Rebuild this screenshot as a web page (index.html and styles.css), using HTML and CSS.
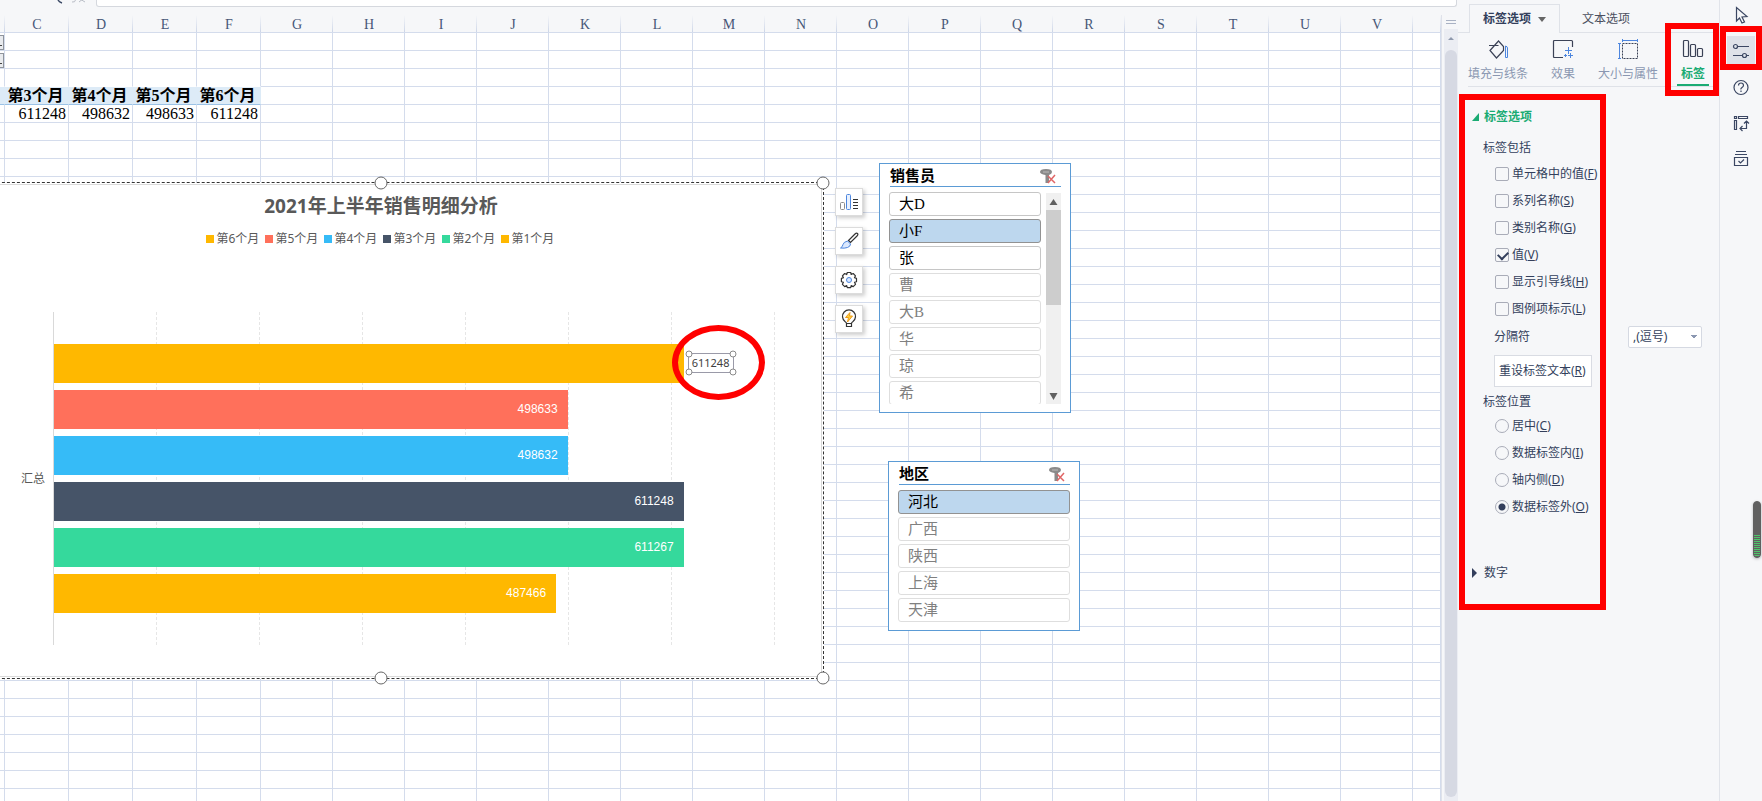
FILE: index.html
```html
<!DOCTYPE html>
<html lang="zh-CN">
<head>
    <meta charset="UTF-8">
    <meta name="viewport" content="width=device-width, initial-scale=1.0">
    <title>2021年上半年销售明细分析</title>
    <link rel="stylesheet" href="styles.css">
</head>
<body>
    <main class="workspace">
        <div class="formula-bar">
            <svg class="formula-icons" width="96" height="7" viewBox="0 0 96 7">
                <path d="M58 0q1 2 4 3" fill="none" stroke="#3b4a66" stroke-width="1.5"/>
                <path d="M72 2q3 1 4-3M79 2l5-4M80-1l5 3" fill="none" stroke="#b9bdc6"/>
            </svg>
            <input class="formula-input" type="text" aria-label="编辑栏">
        </div>
        <div class="sheet-row">
            <div class="sheet">
                <table class="cells">
                    <colgroup id="cols"></colgroup>
                    <thead><tr id="letters"></tr></thead>
                    <tbody id="rows"></tbody>
                </table>

                <section class="chart">
                    <span class="handle handle-top"></span>
                    <span class="handle handle-top-right"></span>
                    <span class="handle handle-bottom"></span>
                    <span class="handle handle-bottom-right"></span>
                    <h2 class="chart-title">2021年上半年销售明细分析</h2>
                    <ul class="legend">
                        <li class="amber">第6个月</li>
                        <li class="coral">第5个月</li>
                        <li class="sky">第4个月</li>
                        <li class="slate">第3个月</li>
                        <li class="green">第2个月</li>
                        <li class="amber">第1个月</li>
                    </ul>
                    <div class="chart-body">
                        <span class="category">汇总</span>
                        <div class="plot">
                            <div class="gridlines"><i></i><i></i><i></i><i></i><i></i><i></i><i></i></div>
                            <div id="bars" class="bars"></div>
                        </div>
                    </div>
                </section>

                <div class="chart-tools">
                    <button type="button" aria-label="图表元素">
                        <svg width="20" height="20" viewBox="0 0 20 20" fill="none">
                            <rect x="1.5" y="10.5" width="4" height="7" rx="1" stroke="#8c8c8c"/>
                            <rect x="7.5" y="2.5" width="4" height="15" rx="1" fill="#e8f1ff" stroke="#4d86de"/>
                            <path d="M14 7.500h5M14 10.500h5M14 13.500h5M14 16.500h5" stroke="#333"/>
                        </svg>
                    </button>
                    <button type="button" aria-label="图表样式">
                        <svg width="20" height="20" viewBox="0 0 20 20" fill="none">
                            <path d="M9.500 9.500L16 3q1.500-1.500 2.500-.5t-.5 2.500l-6.500 6.500z" stroke="#333" stroke-width="1.200"/>
                            <path d="M8.500 10l3 3q0 2.500-3 3.500t-7 .5q2-1 2.500-3.500T8.500 10z" fill="#dbe9ff" stroke="#4d86de"/>
                        </svg>
                    </button>
                    <button type="button" aria-label="设置">
                        <svg width="20" height="20" viewBox="0 0 20 20" fill="none">
                            <path d="M8.300 2.500h3.400l.5 2 2-1 2.300 2.300-1 2 2 .6v3.300l-2 .6 1 2-2.300 2.300-2-1-.5 2H8.300l-.6-2-2 1-2.300-2.300 1-2-2-.6V8.400l2-.6-1-2 2.300-2.300 2 1z" stroke="#333" stroke-width="1.200" stroke-linejoin="round"/>
                            <circle cx="10" cy="10" r="2.500" fill="#dbe9ff" stroke="#4d86de"/>
                        </svg>
                    </button>
                    <button type="button" aria-label="智能推荐">
                        <svg width="20" height="20" viewBox="0 0 20 20" fill="none">
                            <path d="M7.500 14.500q0-1-1.500-2a6.500 6.500 0 1 1 8 0q-1.500 1-1.500 2zM7.500 14.500v3h5v-3" stroke="#333" stroke-width="1.200"/>
                            <path d="M11 3.500l-4.500 5h3l-1 4.500 5-6h-3z" fill="#ffd23c" stroke="#ee9a1b"/>
                        </svg>
                    </button>
                </div>

                <section class="slicer slicer-people">
                    <header class="slicer-head">
                        <h3>销售员</h3>
                        <button type="button" class="clear" aria-label="清除筛选">
                            <svg width="16" height="16" viewBox="0 0 16 16"><path d="M0 3q0-3 6-3t6 3q0 2-3 3v8H5.500V6Q0 5 0 3z" fill="#8a8a8a"/><path d="M3 3h6" stroke="#bbb"/><path d="M8 7l7 7M15 6l-7 8" stroke="#e06666" stroke-width="1.500"/></svg>
                        </button>
                    </header>
                    <div class="slicer-body">
                        <div class="slicer-list">
                            <button type="button">大D</button>
                            <button type="button" class="selected">小F</button>
                            <button type="button">张</button>
                            <button type="button" class="empty">曹</button>
                            <button type="button" class="empty">大B</button>
                            <button type="button" class="empty">华</button>
                            <button type="button" class="empty">琼</button>
                            <button type="button" class="empty">希</button>
                        </div>
                        <div class="slicer-scroll">
                            <svg width="15" height="17" viewBox="0 0 15 17"><path d="M7.500 6l4 6h-8z" fill="#606060"/></svg>
                            <span class="slicer-thumb"></span>
                            <svg width="15" height="17" viewBox="0 0 15 17"><path d="M7.500 13l4-7h-8z" fill="#606060"/></svg>
                        </div>
                    </div>
                </section>

                <section class="slicer slicer-region">
                    <header class="slicer-head">
                        <h3>地区</h3>
                        <button type="button" class="clear" aria-label="清除筛选">
                            <svg width="16" height="16" viewBox="0 0 16 16"><path d="M0 3q0-3 6-3t6 3q0 2-3 3v8H5.500V6Q0 5 0 3z" fill="#8a8a8a"/><path d="M3 3h6" stroke="#bbb"/><path d="M8 7l7 7M15 6l-7 8" stroke="#e06666" stroke-width="1.500"/></svg>
                        </button>
                    </header>
                    <div class="slicer-list">
                        <button type="button" class="selected">河北</button>
                        <button type="button" class="empty">广西</button>
                        <button type="button" class="empty">陕西</button>
                        <button type="button" class="empty">上海</button>
                        <button type="button" class="empty">天津</button>
                    </div>
                </section>
            </div>
            <div class="vscroll">
                <span class="splitter"></span>
                <div class="track">
                    <svg width="14" height="21" viewBox="0 0 14 21"><path d="M7 8l3 3H4z" fill="#8f99ad"/></svg>
                    <span class="thumb"></span>
                </div>
            </div>
        </div>
    </main>

    <aside class="panel">
        <nav class="tabs">
            <button type="button" class="tab active">标签选项<i class="caret"></i></button>
            <button type="button" class="tab">文本选项</button>
        </nav>
        <nav class="groups">
            <button type="button" class="group">
                <svg width="22" height="22" viewBox="0 0 22 22" fill="none">
                    <path d="M2 6.500h9.500M3 11.500l8.500-9.500 5 5.500v4L9.500 19z" stroke="#3b4256" stroke-width="1.200"/>
                    <path d="M18.500 7v11.500h2V9q0-1.500-2-2" stroke="#4d86de"/>
                </svg>
                填充与线条
            </button>
            <button type="button" class="group">
                <svg width="22" height="22" viewBox="0 0 22 22" fill="none">
                    <path d="M11 18.500H2.500q-1 0-1-1v-15q0-1 1-1h17q1 0 1 1V8" stroke="#3b4256" stroke-width="1.200"/>
                    <path d="M16.500 8v7M13 11.500h7M18.500 14v5M16 16.500h5M13.500 15v3M12 16.500h3" stroke="#4d86de"/>
                </svg>
                效果
            </button>
            <button type="button" class="group">
                <svg width="22" height="22" viewBox="0 0 22 22" fill="none">
                    <path d="M5.500 1.500h15M5.500 0v3M20.500 0v3M2.500 4.500v15M1 4.500h3M1 19.500h3" stroke="#4d86de"/>
                    <path d="M5.500 4.500h15v15h-15z" stroke="#3b4256" stroke-dasharray="2 1"/>
                </svg>
                大小与属性
            </button>
            <button type="button" class="group active">
                <svg width="22" height="22" viewBox="0 0 22 22" fill="none" stroke="#3b4256" stroke-width="1.200">
                    <rect x="1.500" y="1.500" width="5" height="16" rx="1"/>
                    <rect x="8.500" y="5.500" width="5" height="12" rx="1"/>
                    <rect x="15.500" y="9.500" width="5" height="8" rx="1"/>
                </svg>
                标签
            </button>
        </nav>
        <div class="options">
            <h4 class="section-title open"><svg width="8" height="8" viewBox="0 0 8 8"><path d="M7 0v8H0z" fill="#1aab73"/></svg>标签选项</h4>
            <h5 class="sub-title">标签包括</h5>
            <div class="choices">
                <label><input type="checkbox">单元格中的值(<u>F</u>)</label>
                <label><input type="checkbox">系列名称(<u>S</u>)</label>
                <label><input type="checkbox">类别名称(<u>G</u>)</label>
                <label><input type="checkbox" checked>值(<u>V</u>)</label>
                <label><input type="checkbox">显示引导线(<u>H</u>)</label>
                <label><input type="checkbox">图例项标示(<u>L</u>)</label>
            </div>
            <div class="separator">
                <label for="sep">分隔符</label>
                <select id="sep"><option>,(逗号)</option></select>
            </div>
            <button type="button" class="reset">重设标签文本(<u>R</u>)</button>
            <h5 class="sub-title">标签位置</h5>
            <div class="choices">
                <label><input type="radio" name="pos">居中(<u>C</u>)</label>
                <label><input type="radio" name="pos">数据标签内(<u>I</u>)</label>
                <label><input type="radio" name="pos">轴内侧(<u>D</u>)</label>
                <label><input type="radio" name="pos" checked>数据标签外(<u>O</u>)</label>
            </div>
            <h4 class="section-title closed"><svg width="8" height="10" viewBox="0 0 8 10"><path d="M0 0l5 5-5 5z" fill="#333f5c"/></svg>数字</h4>
        </div>
        <span class="mark mark-options"></span>
        <span class="mark mark-group"></span>
    </aside>

    <nav class="rail">
        <button type="button" aria-label="选择">
            <svg width="20" height="20" viewBox="0 0 20 20" fill="none" stroke="#3b4763" stroke-width="1.200"><path d="M5.500 2.500v13.500l3-3 2.500 5 2.500-1-2.500-5 5-.5z"/></svg>
        </button>
        <button type="button" class="active" aria-label="属性">
            <svg width="20" height="20" viewBox="0 0 20 20" fill="none" stroke="#3b4763" stroke-width="1.200"><circle cx="4.500" cy="5.500" r="2"/><path d="M6.500 5.500H18M2 14.500h9.500M15.500 14.500H18"/><circle cx="13.500" cy="14.500" r="2"/></svg>
        </button>
        <button type="button" aria-label="帮助">
            <svg width="20" height="20" viewBox="0 0 20 20" fill="none" stroke="#3b4763" stroke-width="1.200"><circle cx="10" cy="10.500" r="7"/><path d="M7.500 8.500q0-2.500 2.500-2.500t2.500 2.500q0 1-1.500 2t-1 2M10 13.500v1.500"/></svg>
        </button>
        <button type="button" aria-label="分析">
            <svg width="20" height="20" viewBox="0 0 20 20" fill="none" stroke="#3b4763" stroke-width="1.200"><path d="M3.500 3.500h2v2h-2zM7.500 3.500h9v2h-9zM3.500 7.500h2v9h-2zM15.500 8v7.500h-6M13 10.500L15.500 8l2.500 2.500M11.500 13L9 15.500l2.500 2.500"/></svg>
        </button>
        <button type="button" aria-label="备份">
            <svg width="20" height="20" viewBox="0 0 20 20" fill="none" stroke="#3b4763" stroke-width="1.200"><path d="M5 2.500h10M4 5.500h12M3.500 8.500h13v8h-13zM7.500 12l2 2 3.500-3.500"/></svg>
        </button>
        <span class="mark mark-rail"></span>
        <span class="meter"></span>
    </nav>

    <script src="script.js"></script>
</body>
</html>
```
FILE: styles.css
```css
* {
    box-sizing: border-box;
}

body {
    display: flex;
    height: 100vh;
    margin: 0;
    overflow: hidden;
    background: #f6f7f9;
    color: #333f5c;
    font: 12px/16px "Noto Sans", "Noto Sans CJK SC", sans-serif;
}

button,
input,
select {
    margin: 0;
    padding: 0;
    border: none;
    background: none;
    color: inherit;
    font: inherit;
}

h2, h3, h4, h5, ul {
    margin: 0;
    padding: 0;
}

svg {
    display: block;
    flex: none;
}

/* Worksheet */

.workspace {
    flex: 1;
    min-width: 0;
    display: flex;
    flex-direction: column;
}

.formula-bar {
    display: flex;
    height: 15px;
    padding-right: 1px;
}

.formula-input {
    flex: 1;
    height: 7px;
    border: 1px solid #d5d8de;
    border-top: none;
    border-radius: 0 0 3px 3px;
    background: #fff;
}

.sheet-row {
    flex: 1;
    min-height: 0;
    display: flex;
}

.sheet {
    position: relative;
    flex: 1;
    min-width: 0;
    overflow: hidden;
    border-right: 1px solid #dfe2ea;
}

.cells {
    width: 100%;
    table-layout: fixed;
    border-collapse: separate;
    border-spacing: 0;
    background: #fff;
    font: 16px/16px "Liberation Serif", "Noto Sans CJK SC", serif;
    color: #000;
}

.cells th,
.cells td {
    height: 18px;
    padding: 1px 0 0;
    overflow: hidden;
    white-space: nowrap;
    border-right: 1px solid #d4dcec;
    border-bottom: 1px solid #d4dcec;
}

.cells thead th {
    padding-top: 3px;
    border-right: none;
    background: linear-gradient(#f6f7f9, #cdd6e8) right / 1px 100% no-repeat #f6f7f9;
    color: #465677;
    font-size: 14px;
    font-weight: normal;
    line-height: 14px;
}

.cells td {
    padding-right: 2px;
    text-align: right;
}

.cells .month {
    border-right-color: #ddebf7;
    border-bottom-color: #9bc2e6;
    background: #ddebf7;
    font-weight: bold;
    text-align: center;
}

.cells .above-month {
    border-bottom-color: #fff;
}

.cells .filter {
    padding: 0;
    background: linear-gradient(#444, #444) left 0 bottom 4px / 2px 1px no-repeat #e9ebee;
    box-shadow: inset 0 2px #fff, inset -1px 3px #8f949c, inset 0 -1px #8f949c;
}

.vscroll {
    width: 16px;
    display: flex;
    flex-direction: column;
    padding-left: 2px;
}

.splitter {
    height: 4px;
    margin: 5px 2px;
    border-top: 1px solid #a9b2c4;
    border-bottom: 1px solid #a9b2c4;
}

.track {
    flex: 1;
    display: flex;
    flex-direction: column;
    padding-bottom: 4px;
    background: #ebedf3;
}

.thumb {
    flex: 1;
    margin: 0 1px;
    border-radius: 6px;
    background: #d6d9e3;
}

/* Chart object */

.chart {
    position: absolute;
    top: 167px;
    left: -63px;
    width: 887px;
    height: 497px;
    padding: 13px 0 0 62px;
    border: 1px dashed #333;
    background: #fff;
    color: #595959;
    box-shadow: inset 0 0 0 1px #fff, inset 0 0 0 2px #d9d9d9;
}

.handle {
    position: absolute;
    width: 13px;
    height: 13px;
    border: 1px solid #666;
    border-radius: 50%;
    background: #fff;
    transform: translate(-50%, -50%);
}

.handle-top { top: 0; left: 50%; }
.handle-top-right { top: 0; left: 100%; }
.handle-bottom { top: 100%; left: 50%; }
.handle-bottom-right { top: 100%; left: 100%; }

.chart-title {
    width: 762px;
    font-size: 19px;
    line-height: 20px;
    text-align: center;
}

.legend {
    display: flex;
    justify-content: center;
    gap: 5px;
    width: 760px;
    margin-top: 15px;
    list-style: none;
}

.legend li {
    display: flex;
    align-items: center;
    gap: 3px;
    width: 54px;
    white-space: nowrap;
    -webkit-text-fill-color: #595959;
}

.legend li::before {
    content: "";
    width: 8px;
    height: 8px;
    background: currentColor;
}

.amber { color: #ffb800; }
.coral { color: #ff705b; }
.sky { color: #36bbf7; }
.slate { color: #465468; }
.green { color: #35d99c; }

.chart-body {
    display: flex;
    align-items: center;
    margin-top: 65px;
}

.category {
    width: 53px;
    padding-right: 8px;
    text-align: right;
}

.plot {
    position: relative;
    width: 722px;
    border-left: 1px solid #d9d9d9;
}

.gridlines {
    position: absolute;
    inset: 0;
    display: flex;
}

.gridlines i {
    flex: 1;
    border-right: 1px dashed #e6e6e6;
}

.bars {
    position: relative;
    display: flex;
    flex-direction: column;
    gap: 7px;
    padding: 32px 0;
}

.bar {
    position: relative;
    height: 39px;
    padding-right: 10px;
    background: currentColor;
    font: 12px/39px "Liberation Sans", sans-serif;
    text-align: right;
}

.bar-value {
    color: #fff;
}

.bar-outside {
    position: absolute;
    top: 9px;
    left: 100%;
    width: 46px;
    height: 20px;
    margin-left: 4px;
    border: 1px solid #9a9aa8;
    color: #404040;
    font: 11px/18px "Noto Sans", sans-serif;
    text-align: center;
}

.bar-outside .dot {
    position: absolute;
    width: 7px;
    height: 7px;
    border: 1px solid #8a8a8a;
    border-radius: 50%;
    background: #fff;
    transform: translate(-50%, -50%);
}

.dot:nth-of-type(1) { top: 0; left: 0; }
.dot:nth-of-type(2) { top: 0; left: 100%; }
.dot:nth-of-type(3) { top: 100%; left: 0; }
.dot:nth-of-type(4) { top: 100%; left: 100%; }

.ring {
    position: absolute;
    top: -29px;
    left: -17px;
    width: 93px;
    height: 75px;
    border: 6px solid #f00;
    border-radius: 50%;
}

.chart-tools {
    position: absolute;
    top: 173px;
    left: 835px;
    display: flex;
    flex-direction: column;
    gap: 11px;
}

.chart-tools button {
    display: grid;
    place-items: center;
    width: 28px;
    height: 28px;
    border: 1px solid #dcdcdc;
    background: #fff;
    box-shadow: 2px 2px 4px #0003;
}

/* Slicers */

.slicer {
    position: absolute;
    width: 192px;
    padding: 3px 9px 8px;
    border: 1px solid #5b9bd5;
    background: #fff;
    color: #000;
}

.slicer-people {
    top: 148px;
    left: 879px;
}

.slicer-region {
    top: 446px;
    left: 888px;
}

.slicer-head {
    display: flex;
    justify-content: space-between;
    height: 20px;
    margin-left: 1px;
    padding: 0 5px 0 0;
    border-bottom: 1px solid #5b9bd5;
}

.slicer-head h3 {
    font-size: 15px;
    line-height: 16px;
}

.slicer-body {
    display: flex;
    gap: 5px;
    height: 217px;
}

.slicer-list {
    flex: 1;
    display: flex;
    flex-direction: column;
    gap: 3px;
    padding-top: 5px;
    overflow: hidden;
}

.slicer-list button {
    flex: none;
    height: 24px;
    padding-left: 9px;
    border: 1px solid #c6c6c6;
    border-radius: 3px;
    font: 15px/22px "Liberation Serif", "Noto Sans CJK SC", serif;
    text-align: left;
}

.slicer-list .selected {
    border-color: #929292;
    background: #bdd7ee;
}

.slicer-list .empty {
    border-color: #dedede;
    color: #808080;
}

.slicer-scroll {
    display: flex;
    flex-direction: column;
    width: 15px;
    margin-top: 6px;
    background: #f0f0f0;
}

.slicer-thumb {
    height: 95px;
    margin-bottom: auto;
    background: #cdcdcd;
}

/* Task pane */

.panel {
    position: relative;
    width: 262px;
    border-right: 1px solid #e1e4ea;
}

.tabs {
    display: flex;
    height: 33px;
    padding: 4px 0 0 11px;
    box-shadow: inset 0 -1px #dfe2e8;
}

.tab {
    padding: 0 22px;
    color: #4b5060;
}

.tab.active {
    display: flex;
    align-items: center;
    gap: 7px;
    padding: 0 13px;
    border: 1px solid #dfe2e8;
    border-bottom: none;
    background: #f6f7f9;
    color: #333f5c;
    font-weight: bold;
}

.caret {
    border: 4px solid transparent;
    border-top: 5px solid #666;
    border-bottom: none;
}

.groups {
    display: flex;
    height: 54px;
    margin-left: 10px;
    border-bottom: 1px solid #dfe2e8;
}

.group {
    display: flex;
    flex-direction: column;
    align-items: center;
    gap: 5px;
    width: 60px;
    padding-top: 6px;
    color: #8b97b1;
    white-space: nowrap;
}

.group:nth-child(2) {
    width: 70px;
}

.group.active {
    width: 32px;
    margin-left: 19px;
    border-bottom: 2px solid #1aab73;
    color: #1aab73;
    font-weight: bold;
}

.options {
    padding: 22px 17px 0 14px;
}

.section-title {
    display: flex;
    align-items: center;
    gap: 4px;
    font-size: 12px;
}

.section-title.open {
    color: #1aab73;
}

.section-title.closed {
    margin-top: 45px;
    font-weight: normal;
}

.sub-title {
    margin: 15px 0 4px 11px;
    font-size: 12px;
    font-weight: normal;
}

.choices label {
    display: flex;
    align-items: center;
    height: 27px;
    padding-left: 23px;
}

.choices input {
    appearance: none;
    width: 14px;
    height: 14px;
    margin-right: 3px;
    border: 1px solid #a9acb8;
    border-radius: 2px;
}

.choices input[type="checkbox"]:checked::before {
    content: "";
    display: block;
    width: 8px;
    height: 5px;
    margin: 3px 2px;
    border: solid #333f5c;
    border-width: 0 0 2px 2px;
    transform: translateY(-1px) rotate(-45deg);
}

.choices input[type="radio"] {
    border-radius: 50%;
}

.choices input[type="radio"]:checked {
    background: radial-gradient(circle, #333f5c 3px, transparent 4px);
}

.separator {
    display: flex;
    align-items: center;
    justify-content: space-between;
    height: 22px;
    margin: 4px 0 7px 22px;
}

.separator select {
    appearance: none;
    width: 74px;
    height: 22px;
    padding-left: 4px;
    border: 1px solid #d5d9e2;
    border-radius: 2px;
    background: #fff;
    background-image: linear-gradient(to bottom left, #8b97b1 50%, transparent 50%), linear-gradient(to bottom right, #8b97b1 50%, transparent 50%);
    background-position: 62px 8px, 65px 8px;
    background-size: 3px 4px;
    background-repeat: no-repeat;
}

.reset {
    display: block;
    height: 32px;
    margin-left: 22px;
    padding: 0 5px 0 4px;
    border: 1px solid #d9dce3;
    background: #fff;
}

.reset + .sub-title {
    margin-top: 7px;
    margin-bottom: 2px;
}

.mark {
    position: absolute;
    border: 6px solid #f00;
    pointer-events: none;
}

.mark-options {
    top: 94px;
    left: 1px;
    width: 147px;
    height: 516px;
}

.mark-group {
    top: 23px;
    right: 0;
    width: 54px;
    height: 73px;
}

/* Right rail */

.rail {
    position: relative;
    display: flex;
    flex-direction: column;
    align-items: center;
    gap: 6px;
    width: 42px;
}

.rail button {
    display: grid;
    place-items: center;
    width: 28px;
    height: 30px;
}

.rail .active {
    background: #dfe2e9;
}

.mark-rail {
    top: 26px;
    right: 0;
    width: 42px;
    height: 44px;
}

.meter {
    position: absolute;
    top: 501px;
    right: 1px;
    width: 8px;
    height: 57px;
    border: 1px solid #606060;
    border-radius: 4px;
    background: repeating-linear-gradient(#4fc36a 0 1px, #606060 1px 2px) bottom / 100% 22px no-repeat #606060;
    box-shadow: 0 1px 3px #0004;
}
```
FILE: script.js
```js
const letters = ['', ...'CDEFGHIJKLMNOPQRSTUV', ''];
const months = ['', '第3个月', '第4个月', '第5个月', '第6个月'];
const totals = ['', '611248', '498632', '498633', '611248'];

const cols = document.querySelector('#cols');
const head = document.querySelector('#letters');
letters.forEach((letter, i) => {
    const col = document.createElement('col');
    if (i === 0) col.style.width = '5px';
    else if (i <= 4) col.style.width = '64px';
    else if (i < letters.length - 1) col.style.width = '72px';
    cols.appendChild(col);

    const th = document.createElement('th');
    th.textContent = letter;
    head.appendChild(th);
});

const rows = document.querySelector('#rows');
for (let r = 1; r <= 60; r++) {
    const tr = document.createElement('tr');
    letters.forEach((_, c) => {
        const td = document.createElement('td');
        if (r <= 2 && c === 0) td.classList.add('filter');
        if (r === 3 && c < 5) td.classList.add('above-month');
        if (r === 4 && c < 5) {
            td.classList.add('month');
            td.textContent = months[c];
        }
        if (r === 5 && c < 5) td.textContent = totals[c];
        tr.appendChild(td);
    });
    rows.appendChild(tr);
}

const series = [
    { value: 611248, color: 'amber', outside: true },
    { value: 498633, color: 'coral' },
    { value: 498632, color: 'sky' },
    { value: 611248, color: 'slate' },
    { value: 611267, color: 'green' },
    { value: 487466, color: 'amber' },
];
const max = 700000;

const bars = document.querySelector('#bars');
for (const item of series) {
    const bar = document.createElement('div');
    bar.classList.add('bar', item.color);
    bar.style.width = (item.value / max * 100) + '%';

    const value = document.createElement('span');
    value.textContent = item.value;
    value.classList.add(item.outside ? 'bar-outside' : 'bar-value');
    if (item.outside) {
        // selected label: four corner handles and the ring round it
        for (let i = 0; i < 4; i++) {
            const dot = document.createElement('i');
            dot.classList.add('dot');
            value.appendChild(dot);
        }
        const ring = document.createElement('b');
        ring.classList.add('ring');
        value.appendChild(ring);
    }
    bar.appendChild(value);
    bars.appendChild(bar);
}
```
